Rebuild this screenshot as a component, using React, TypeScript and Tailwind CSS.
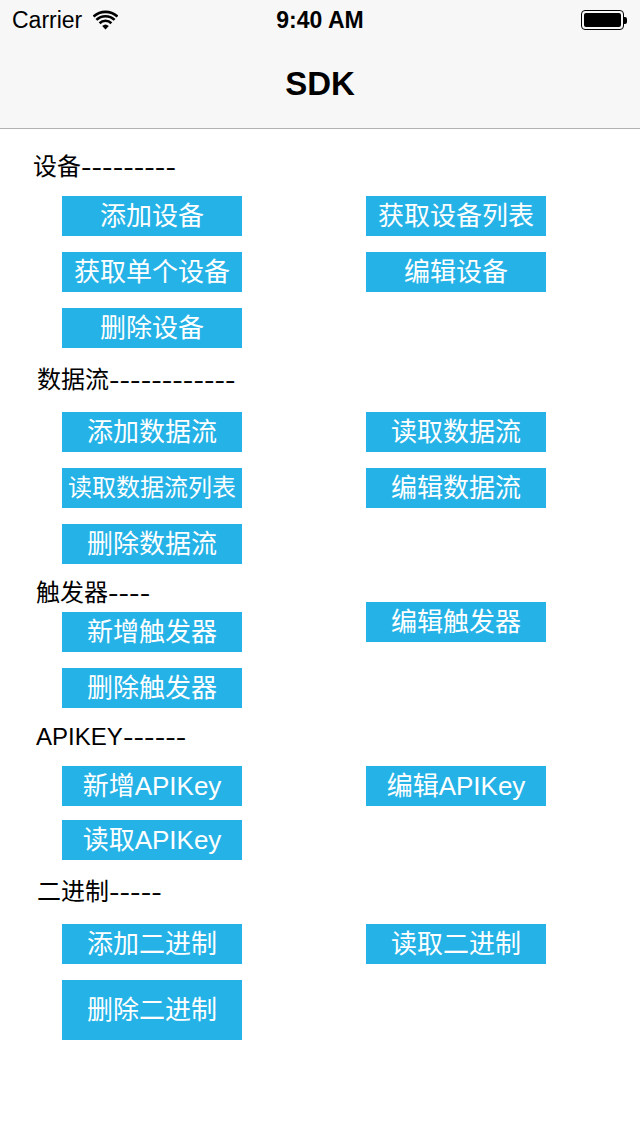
import React from "react";

const FONT = '"Liberation Sans", "Noto Sans CJK SC", sans-serif';

function Btn({ label, tall, small, className = "" }: { label: string; tall?: boolean; small?: boolean; className?: string }) {
  return (
    <button
      className={`w-[180px] ${tall ? "h-[60px]" : "h-[40px]"} bg-[#25b3e7] text-white ${small ? "text-[24px]" : "text-[26px]"} leading-none flex items-center justify-center whitespace-nowrap ${className}`}
    >
      {label}
    </button>
  );
}

function Row({ left, right, className = "" }: { left: React.ReactNode; right?: React.ReactNode; className?: string }) {
  return (
    <div className={`flex items-start pl-[62px] ${className}`}>
      <div className="w-[304px]">{left}</div>
      {right}
    </div>
  );
}

// iOS hyphens are wider than Liberation's, so the run of dashes is stretched
function Dashes({ text }: { text: string }) {
  return <span className="inline-block origin-left scale-x-[1.32]">{text}</span>;
}

function Header({ title, dashes, className = "" }: { title: string; dashes: string; className?: string }) {
  return (
    <div className={`h-[24px] leading-[24px] text-[24px] text-black whitespace-nowrap ${className}`}>
      {title}
      <Dashes text={dashes} />
    </div>
  );
}

function Wifi() {
  return (
    <svg width="25" height="20" viewBox="0 0 25 20">
      <path d="M12.5 19.5 L9.2 16 A4.8 4.8 0 0 1 15.8 16 Z" fill="#000" />
      <path d="M6.6 13.2 A8.5 8.5 0 0 1 18.4 13.2" stroke="#000" strokeWidth="2.6" fill="none" />
      <path d="M3.4 9.9 A13 13 0 0 1 21.6 9.9" stroke="#000" strokeWidth="2.6" fill="none" />
      <path d="M0.5 6.6 A17.5 17.5 0 0 1 24.5 6.6" stroke="#000" strokeWidth="2.6" fill="none" />
    </svg>
  );
}

function Battery() {
  return (
    <div className="flex items-center">
      <div className="w-[43px] h-[20px] rounded-[4px] border border-black p-[2px]">
        <div className="w-full h-full bg-black rounded-[2px]" />
      </div>
      <div className="w-[3px] h-[7px] bg-black rounded-r-[2px]" />
    </div>
  );
}

export default function App() {
  return (
    <div className="w-[640px] h-[1136px] bg-white" style={{ fontFamily: FONT }}>
      <div className="h-[128px] bg-[#f7f7f7] border-b border-[#b2b2b2] box-content">
        <div className="h-[40px] flex items-center justify-between px-[12px] relative">
          <div className="flex items-center gap-[11px]">
            <span className="text-[23px] text-black leading-none">Carrier</span>
            <Wifi />
          </div>
          <span className="absolute left-0 right-0 text-center text-[23px] font-bold text-black leading-none pointer-events-none">
            9:40 AM
          </span>
          <div className="pr-[1px]">
            <Battery />
          </div>
        </div>
        <div className="h-[88px] flex items-center justify-center pb-[1px]">
          <span className="text-[33px] font-bold text-black">SDK</span>
        </div>
      </div>

      <div className="flex flex-col">
        <Header title="设备" dashes="---------" className="mt-[26px] pl-[33px]" />
        <Row className="mt-[17px]" left={<Btn label="添加设备" />} right={<Btn label="获取设备列表" />} />
        <Row className="mt-[16px]" left={<Btn label="获取单个设备" />} right={<Btn label="编辑设备" />} />
        <Row className="mt-[16px]" left={<Btn label="删除设备" />} />

        <Header title="数据流" dashes="------------" className="mt-[20px] pl-[37px]" />
        <Row className="mt-[20px]" left={<Btn label="添加数据流" />} right={<Btn label="读取数据流" />} />
        <Row className="mt-[16px]" left={<Btn label="读取数据流列表" small />} right={<Btn label="编辑数据流" />} />
        <Row className="mt-[16px]" left={<Btn label="删除数据流" />} />

        <div className="mt-[20px] h-[18px] leading-[18px] text-[24px] text-black pl-[36px] whitespace-nowrap">
          触发器<Dashes text="----" />
        </div>
        <Row left={<Btn label="新增触发器" className="mt-[10px]" />} right={<Btn label="编辑触发器" />} />
        <Row className="mt-[16px]" left={<Btn label="删除触发器" />} />

        <Header title="APIKEY" dashes="------" className="mt-[17px] pl-[36px]" />
        <Row className="mt-[17px]" left={<Btn label="新增APIKey" />} right={<Btn label="编辑APIKey" />} />
        <Row className="mt-[14px]" left={<Btn label="读取APIKey" />} />

        <Header title="二进制" dashes="-----" className="mt-[20px] pl-[37px]" />
        <Row className="mt-[20px]" left={<Btn label="添加二进制" />} right={<Btn label="读取二进制" />} />
        <Row className="mt-[16px]" left={<Btn label="删除二进制" tall />} />
      </div>
    </div>
  );
}
